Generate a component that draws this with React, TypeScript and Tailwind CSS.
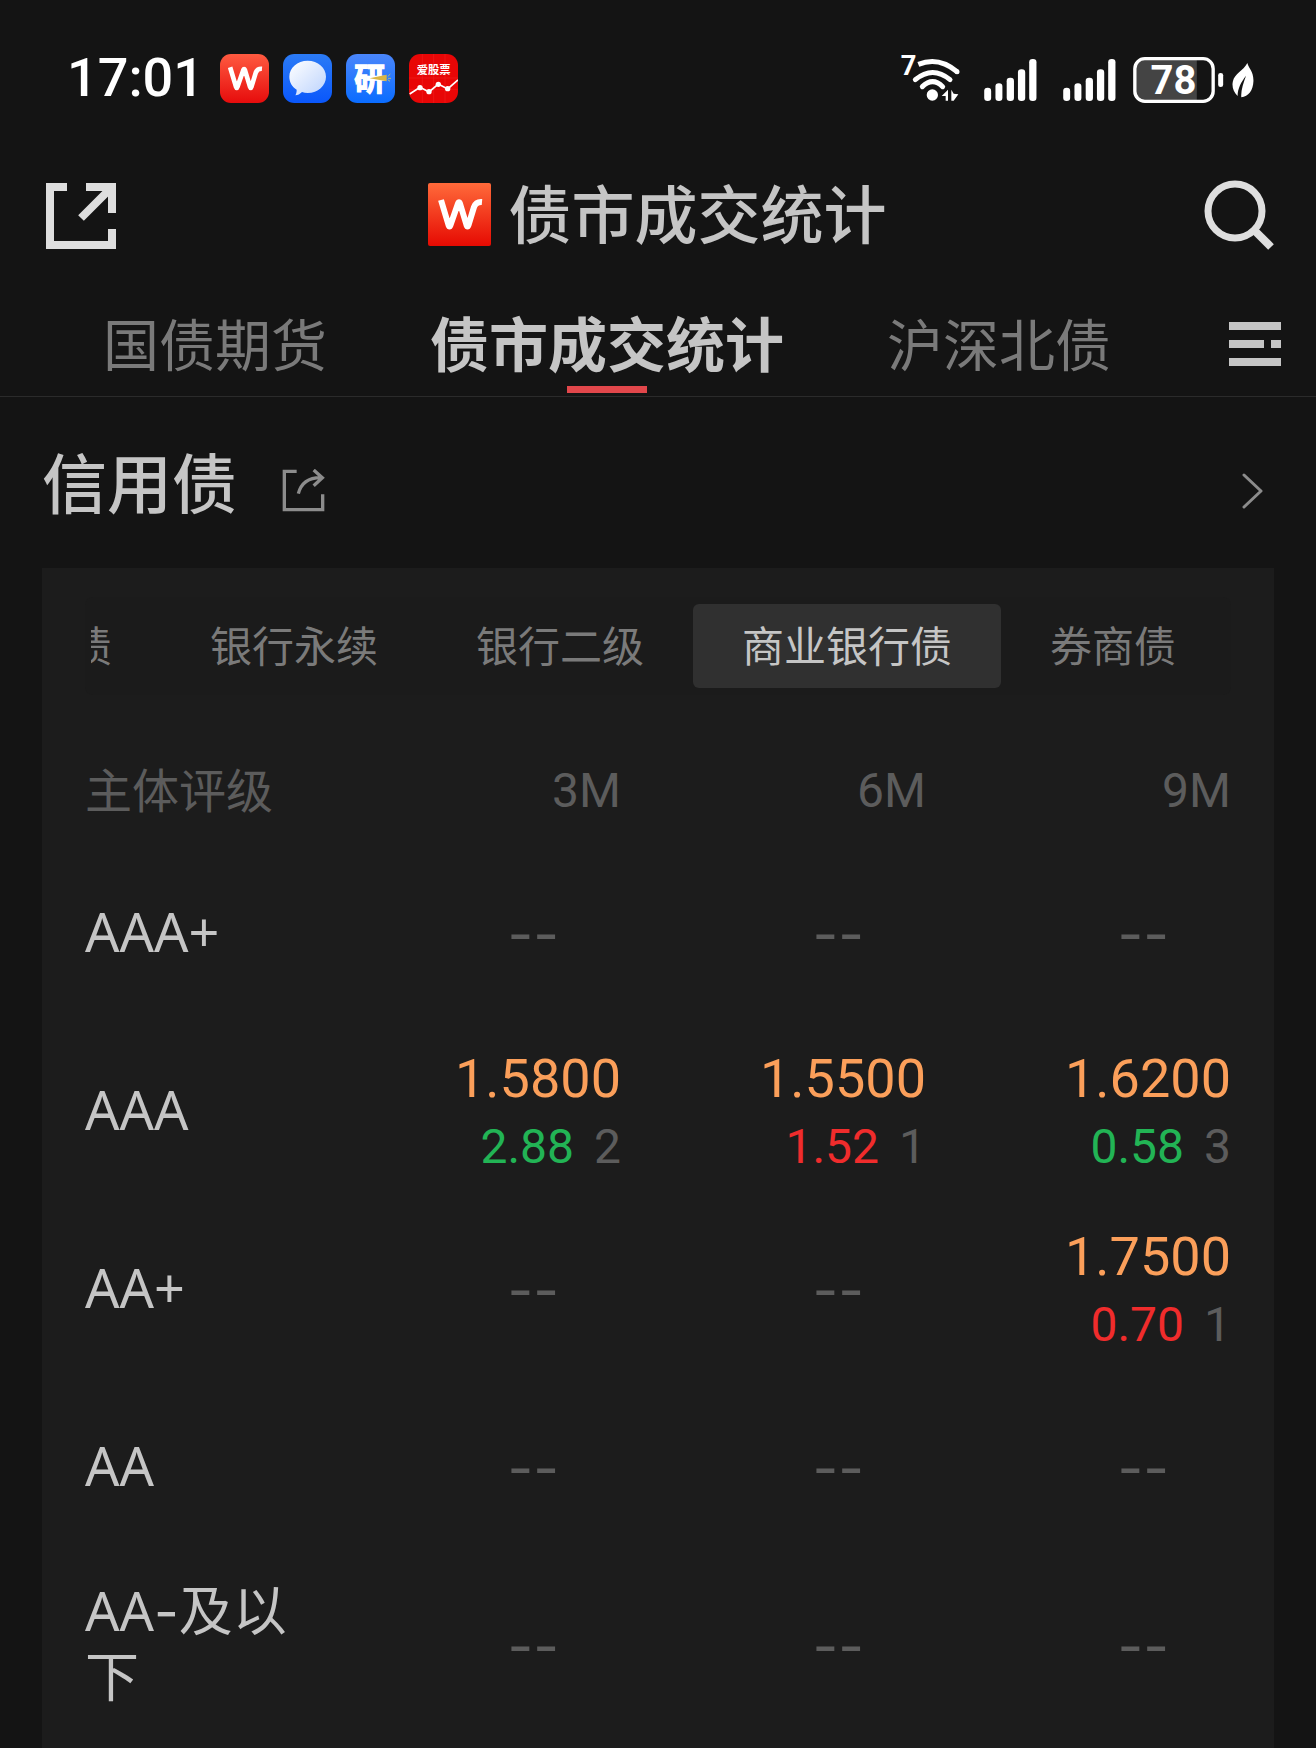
import React from "react";

const CJK = "font-['Noto_Sans_CJK_SC',sans-serif]";

type Quote = { price: string; change: string; up: boolean; count: string } | null;

const rows: { rating: string; quotes: Quote[] }[] = [
  { rating: "AAA+", quotes: [null, null, null] },
  {
    rating: "AAA",
    quotes: [
      { price: "1.5800", change: "2.88", up: false, count: "2" },
      { price: "1.5500", change: "1.52", up: true, count: "1" },
      { price: "1.6200", change: "0.58", up: false, count: "3" },
    ],
  },
  {
    rating: "AA+",
    quotes: [null, null, { price: "1.7500", change: "0.70", up: true, count: "1" }],
  },
  { rating: "AA", quotes: [null, null, null] },
  { rating: "AA-及以下", quotes: [null, null, null] },
];

const tabs = ["国债期货", "债市成交统计", "沪深北债"];
const segments = ["债", "银行永续", "银行二级", "商业银行债", "券商债"];
const terms = ["3M", "6M", "9M"];

function WMark({ id, top, bottom, radius, className }: { id: string; top: string; bottom: string; radius: number; className: string }) {
  return (
    <svg viewBox="0 0 63 63" className={className} aria-hidden="true">
      <defs>
        <linearGradient id={id} x1="0" y1="0" x2="0" y2="1">
          <stop offset="0" stopColor={top} />
          <stop offset="1" stopColor={bottom} />
        </linearGradient>
      </defs>
      <rect width="63" height="63" rx={radius} fill={`url(#${id})`} />
      <path
        d="M13 17 20.500 42Q21.500 45 22.500 42L30 20.500Q31 18 32 20.500L38.500 42Q39.500 45 40.500 42L46 24Q48 18.500 54 19"
        fill="none"
        stroke="#fff"
        strokeWidth="6"
        strokeLinejoin="round"
      />
    </svg>
  );
}

function ChatApp() {
  return (
    <svg viewBox="0 0 147 147" className="size-[49px]" aria-hidden="true">
      <defs>
        <linearGradient id="chat-bg" x1="0" y1="0" x2="0" y2="1">
          <stop offset="0" stopColor="#2b7bf6" />
          <stop offset="1" stopColor="#0a57fb" />
        </linearGradient>
        <linearGradient id="chat-bubble" x1="0" y1="0" x2="1" y2="1">
          <stop offset="0" stopColor="#ffffff" />
          <stop offset="1" stopColor="#bcd3fd" />
        </linearGradient>
      </defs>
      <rect width="147" height="147" rx="34" fill="url(#chat-bg)" />
      <path d="M74 20c31 0 55 21 55 48s-24 49-55 49c-6 0-12-1-17-3-6 6-13 10-20 10 3-5 4-10 4-17-14-9-22-23-22-39 0-27 24-48 55-48z" fill="url(#chat-bubble)" />
    </svg>
  );
}

function ResearchApp() {
  return (
    <svg viewBox="0 0 147 147" className="size-[49px]" role="img" aria-label="研">
      <defs>
        <linearGradient id="research-bg" x1="0" y1="0" x2="0" y2="1">
          <stop offset="0" stopColor="#4a86fb" />
          <stop offset="1" stopColor="#0a6cff" />
        </linearGradient>
      </defs>
      <rect width="147" height="147" rx="34" fill="url(#research-bg)" />
      <text x="71" y="109" textAnchor="middle" fontSize="93" fontWeight="700" fill="#fff" stroke="#fff" strokeWidth="4" fontFamily="'Noto Sans CJK SC', sans-serif">
        研
      </text>
      <path d="M71 73 122 62v20z" fill="#d9b545" />
      <path d="M125 68l8-8M126 73h9M125 77l7 5" stroke="#b9b77a" strokeWidth="3" />
    </svg>
  );
}

function StockApp() {
  return (
    <svg viewBox="0 0 147 147" className="size-[49px]" role="img" aria-label="爱股票">
      <rect width="147" height="147" rx="34" fill="#e80606" />
      <path d="M40 0v147M74 0v147M108 0v147M0 72h147M0 106h147" stroke="#f01c1c" strokeWidth="2" />
      <text x="74" y="61" textAnchor="middle" fontSize="34" fontWeight="700" fill="#fff" fontFamily="'Noto Sans CJK SC', sans-serif">
        爱股票
      </text>
      <path d="M2 120 33 100 60 114 88 90 116 105 147 78" fill="none" stroke="#fff" strokeWidth="5" />
      <g fill="#fff">
        <circle cx="33" cy="101" r="8" />
        <circle cx="60" cy="113" r="8" />
        <circle cx="88" cy="91" r="8" />
        <circle cx="116" cy="104" r="8" />
      </g>
    </svg>
  );
}

function Wifi() {
  return (
    <svg viewBox="36 25 180 189" className="h-[63px] w-[60px]" role="img" aria-label="Wi-Fi 7">
      <text x="38" y="103" fontSize="82" fontWeight="700" fill="#fff" fontFamily="Roboto, sans-serif">
        7
      </text>
      <g fill="none" stroke="#fff" strokeWidth="15">
        <path d="M91 71Q152 46 207 93" />
        <path d="M207 93h.1M82 117Q134 74 186 117M103 138Q134 108 164 138" strokeLinecap="round" />
      </g>
      <circle cx="133" cy="163" r="17" fill="#fff" />
      <path d="M180 147v33h-7v-14h-12zM190 147l7 12 14 2-14 19h-7v-33z" fill="#fff" />
    </svg>
  );
}

function Signal() {
  return (
    <svg viewBox="0 0 159 127" className="h-[42px] w-[53px]" aria-hidden="true" fill="#fff">
      <rect x="0" y="87" width="21" height="40" rx="10" />
      <rect x="34" y="73" width="21" height="54" rx="10" />
      <rect x="68" y="57" width="22" height="70" rx="10" />
      <rect x="102" y="31" width="22" height="96" rx="10" />
      <rect x="136" y="0" width="22" height="127" rx="10" />
    </svg>
  );
}

function Battery() {
  return (
    <svg viewBox="0 -6 272 150" className="h-[50px] w-[91px]" role="img" aria-label="78%">
      <path d="M34 5H191V133H34Q5 133 5 104V34Q5 5 34 5z" fill="#444" />
      <rect x="5" y="5" width="235" height="128" rx="30" fill="none" stroke="#fff" strokeWidth="10" />
      <rect x="255" y="48" width="15" height="42" rx="7" fill="#fff" />
      <text x="121" y="112" textAnchor="middle" fontSize="120" fontWeight="700" fill="#fff" fontFamily="Roboto, sans-serif">
        78
      </text>
    </svg>
  );
}

function Leaf() {
  return (
    <svg viewBox="0 0 64 104" className="h-[35px] w-[22px]" aria-hidden="true">
      <path d="M45 0C49 16 64 26 63 54 62 82 48 99 27 102 25 84 33 60 41 38 27 56 16 76 16 98 4 88-2 70 2 54 7 32 34 22 45 0z" fill="#fff" />
    </svg>
  );
}

function Rating({ name }: { name: string }) {
  const [grade, rest] = name.split("-");
  if (rest === undefined) return <>{grade}</>;
  return (
    <>
      {grade}
      <span className="font-['Inter',sans-serif]">-</span>
      {rest}
    </>
  );
}

export default function App() {
  return (
    <div className={`flex min-h-screen w-full flex-col overflow-hidden bg-[#141414] text-[#c5c5c5] ${CJK}`}>
      <header>
        <div className="flex h-[156px] items-center pr-[62px] pl-[67px] text-white">
          <span className="font-['Roboto',sans-serif] text-[54px] leading-[64px] font-medium">17:01</span>
          <div className="ml-4 flex gap-3.5">
            <WMark id="w-app" top="#ff5a40" bottom="#e60c0c" radius={14} className="size-[49px]" />
            <ChatApp />
            <ResearchApp />
            <StockApp />
          </div>
          <div className="ml-auto flex items-center pt-1">
            <Wifi />
            <div className="ml-6 flex gap-[26px]">
              <Signal />
              <Signal />
            </div>
            <div className="ml-[17px] flex items-center gap-2">
              <Battery />
              <Leaf />
            </div>
          </div>
        </div>

        <div className="flex h-30 items-center justify-between px-[42px]">
          <button type="button" aria-label="打开" className="pl-1">
            <svg viewBox="0 0 70 66" className="h-[66px] w-[70px]" fill="none" stroke="#dedede" strokeWidth="8">
              <path d="M21 4H4V62H66V46M40 4H66V30M65 5 35 35" />
            </svg>
          </button>
          <div className="flex items-center gap-[18px] pr-1.5 pb-1">
            <WMark id="w-title" top="#ff6a3a" bottom="#e60a02" radius={2} className="size-[63px]" />
            <h1 className="pb-1.5 text-[63px] leading-[80px] font-medium">债市成交统计</h1>
          </div>
          <button type="button" aria-label="搜索">
            <svg viewBox="0 0 70 72" className="h-[72px] w-[70px]" fill="none" stroke="#dedede" strokeWidth="7">
              <circle cx="31" cy="31" r="27" />
              <path d="M50 50 67 67" strokeWidth="8" />
            </svg>
          </button>
        </div>

        <nav className="flex h-[121px] items-end justify-between border-b border-[#2b2b2b] pr-[35px] pl-[103px]">
          <div className="flex items-end gap-[103px]">
            {tabs.map((tab, i) => (
              <button
                type="button"
                key={tab}
                className={
                  i === 1
                    ? "flex flex-col items-center gap-2 pb-[3px] text-[59px] leading-[72px] font-bold"
                    : "flex flex-col items-center gap-2 pb-[3px] text-[56px] leading-[72px] text-[#7a7a7a]"
                }
              >
                {tab}
                <span className={i === 1 ? "h-[7px] w-20 bg-[#e2474b]" : "h-[7px] w-20"} />
              </button>
            ))}
          </div>
          <button type="button" aria-label="菜单" className="pb-[30px]">
            <svg viewBox="0 0 52 44" className="h-[44px] w-[52px]" fill="#c5c5c5">
              <path d="M0 0h52v8H0zM0 18h35v8H0zM42 18h10v8H42zM0 36h52v8H0z" />
            </svg>
          </button>
        </nav>
      </header>

      <main className="flex flex-1 flex-col px-[42px]">
        <div className="flex h-[171px] items-center">
          <h2 className="pb-1.5 text-[65px] leading-[80px] font-medium">信用债</h2>
          <button type="button" aria-label="分享" className="ml-[45px] pt-4">
            <svg viewBox="0 0 129 129" className="size-[43px]" fill="none" stroke="#8c8c8c" strokeWidth="10">
              <path d="M44 7H7V122H122V76" />
              <path d="M49 74Q62 24 120 26M95 3 121 26 95 50" />
            </svg>
          </button>
          <button type="button" aria-label="更多" className="mr-2.5 ml-auto pt-4">
            <svg viewBox="0 0 22 38" className="h-[38px] w-[22px]" fill="none" stroke="#8c8c8c" strokeWidth="3" strokeLinecap="round" strokeLinejoin="round">
              <path d="M2 3 19 19 2 35" />
            </svg>
          </button>
        </div>

        <section className="flex-1 bg-[#1c1c1c] px-[43px] pt-[29px]">
          <div className="rounded-lg bg-[#1b1b1b] px-1.5 py-[7px]">
            <div className="flex justify-end overflow-hidden">
              {segments.map((name, i) => (
                <button
                  type="button"
                  key={name}
                  className={
                    i === 3
                      ? "h-[84px] shrink-0 rounded-md bg-[#303030] px-[49px] pb-1 text-[42px] leading-[64px]"
                      : "h-[84px] shrink-0 rounded-md px-[49px] pb-1 text-[42px] leading-[64px] text-[#7a7a7a]"
                  }
                >
                  {name}
                </button>
              ))}
            </div>
          </div>

          <table className="mt-[43px] w-full table-fixed border-collapse">
            <thead>
              <tr className="h-[106px] leading-[64px] text-[#5c5c5c]">
                <th scope="col" className="w-[231px] pb-1.5 text-left text-[47px] font-normal">主体评级</th>
                {terms.map((term) => (
                  <th scope="col" key={term} className="text-right font-['Roboto',sans-serif] text-[48px] font-normal">
                    {term}
                  </th>
                ))}
              </tr>
            </thead>
            <tbody>
              {rows.map((row) => (
                <tr key={row.rating} className="h-[178px]">
                  <th scope="row" className="pb-1 text-left font-['Noto_Sans','Noto_Sans_CJK_SC',sans-serif] text-[54px] leading-[64px] font-normal">
                    <Rating name={row.rating} />
                  </th>
                  {row.quotes.map((q, i) => (
                    <td key={i} className="text-right">
                      {q ? (
                        <div className="pt-1 font-['Roboto',sans-serif] leading-[68px]">
                          <div className="text-[54px] text-[#fb9f5a]">{q.price}</div>
                          <div className="flex justify-end gap-5 text-[48px]">
                            <span className={q.up ? "text-[#f02c2c]" : "text-[#22b455]"}>{q.change}</span>
                            <span className="text-[#5c5c5c]">{q.count}</span>
                          </div>
                        </div>
                      ) : (
                        <span className="block pt-0.5 pr-[62px] font-['Inter',sans-serif] text-[56px] leading-[68px] text-[#5c5c5c]">--</span>
                      )}
                    </td>
                  ))}
                </tr>
              ))}
            </tbody>
          </table>
        </section>
      </main>
    </div>
  );
}
